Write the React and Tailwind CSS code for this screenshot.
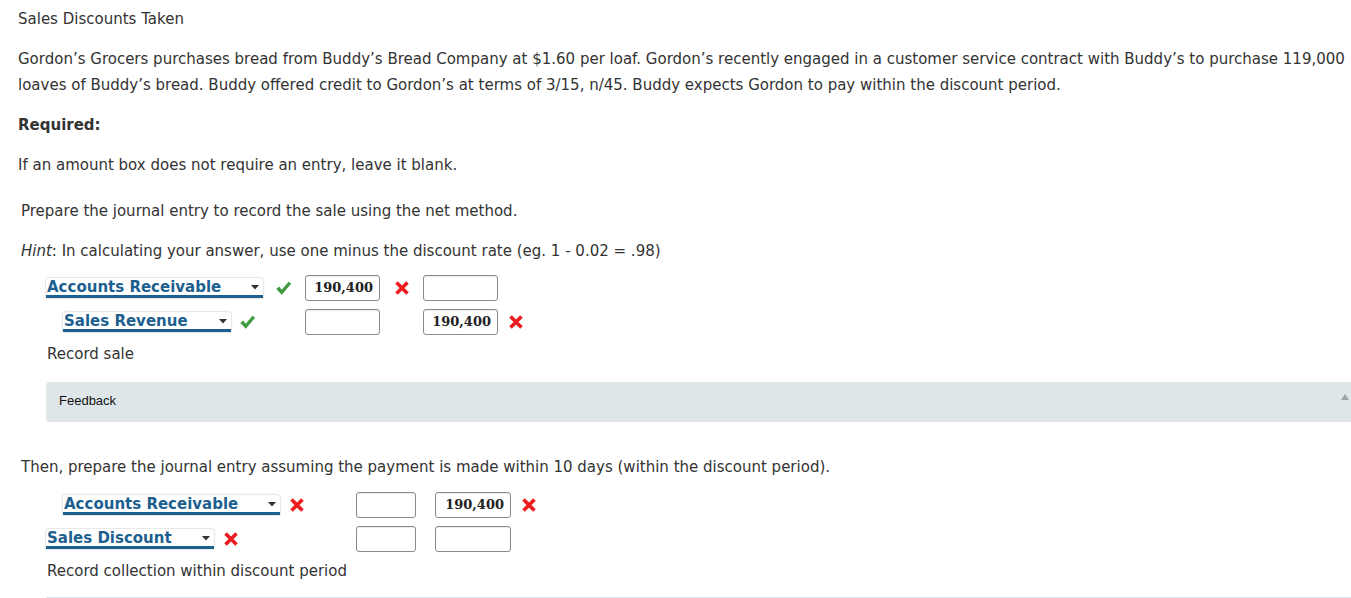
import React from "react";

const Check = () => (
  <svg width="17" height="17" viewBox="0 0 16 16" className="shrink-0">
    <path d="M1.2 8.4 L4 6.1 L6.3 9.2 L12.8 1.6 L15.2 3.6 L6.4 13.9 Z" fill="#3f9b3f" />
  </svg>
);

const Cross = () => (
  <svg width="14" height="14" viewBox="0 0 14 14" className="shrink-0">
    <path d="M1.5 1.5 L12.5 12.5 M12.5 1.5 L1.5 12.5" fill="none" stroke="#ec1c1f" strokeWidth="3.6" strokeLinecap="butt" />
  </svg>
);

const Select = ({ label, width }) => (
  <div
    className={`${width} h-[20px] flex items-center justify-between border-b-[3px] border-[#1d5f8f] shadow-[0_0_2px_rgba(0,0,0,0.35)] rounded-t-[3px] bg-white`}
  >
    <span className="font-bold text-[15px] leading-[18px] text-[#1d5f8f] pl-[1px]">{label}</span>
    <svg width="10" height="6" viewBox="0 0 10 6" className="mr-[3px]">
      <path d="M1 1 L9 1 L5 5.5 Z" fill="#333" />
    </svg>
  </div>
);

const Amount = ({ value, width = "w-[75px]" }) => (
  <div
    className={`${width} h-[26px] border border-[#8a8a8a] rounded-[3px] bg-white flex items-center justify-end pr-[6px] font-['DejaVu_Serif',serif] font-bold text-[13px] text-[#222] shadow-[inset_0_1px_1px_rgba(0,0,0,0.08)]`}
  >
    {value}
  </div>
);

const Mark = ({ type, className = "" }) => (
  <div className={`flex items-center ${className}`}>{type === "ok" ? <Check /> : type === "no" ? <Cross /> : null}</div>
);

const App = () => {
  return (
    <div className="w-[1351px] h-[598px] overflow-hidden bg-white font-['DejaVu_Sans',Verdana,sans-serif] text-[15px] leading-[26px] text-[#333] pt-[6px] pl-[18px]">
      <p>Sales Discounts Taken</p>
      <p className="mt-[14px] w-[1333px]">
        Gordon’s Grocers purchases bread from Buddy’s Bread Company at $1.60 per loaf. Gordon’s recently engaged in a customer
        service contract with Buddy’s to purchase 119,000 loaves of Buddy’s bread. Buddy offered credit to Gordon’s at terms of
        3/15, n/45. Buddy expects Gordon to pay within the discount period.
      </p>
      <p className="mt-[14px] font-bold">Required:</p>
      <p className="mt-[14px]">If an amount box does not require an entry, leave it blank.</p>

      <div className="pl-[3px]">
        <p className="mt-[20px]">Prepare the journal entry to record the sale using the net method.</p>
        <p className="mt-[14px]">
          <i>Hint</i>: In calculating your answer, use one minus the discount rate (eg. 1 - 0.02 = .98)
        </p>

        <div className="pl-[25px]">
          <div className="mt-[11px] flex items-center">
            <div className="w-[259px] flex items-center gap-[12px]">
              <Select label="Accounts Receivable" width="w-[217px]" />
              <Mark type="ok" />
            </div>
            <Amount value="190,400" />
            <Mark type="no" className="w-[43px] justify-center" />
            <Amount value="" />
          </div>
          <div className="mt-[8px] flex items-center">
            <div className="w-[259px] flex items-center gap-[8px] pl-[17px]">
              <Select label="Sales Revenue" width="w-[168px]" />
              <Mark type="ok" />
            </div>
            <Amount value="" />
            <div className="w-[43px]" />
            <Amount value="190,400" />
            <Mark type="no" className="w-[36px] justify-center" />
          </div>
          <p className="mt-[6px] pl-[1px]">Record sale</p>

          <div className="mt-[15px] h-[40px] w-[1320px] bg-[#dfe6ea] rounded-l-[4px] flex items-center justify-between pl-[13px] pr-[16px]">
            <span className="font-['Liberation_Sans',Arial,sans-serif] text-[13px] text-[#111] -mt-[2px]">Feedback</span>
            <svg width="10" height="8" viewBox="0 0 10 8" className="mb-[10px]">
              <path d="M1 7 L5 1 L9 7 Z" fill="#9aa3a8" />
            </svg>
          </div>
        </div>

        <p className="mt-[32px]">Then, prepare the journal entry assuming the payment is made within 10 days (within the discount period).</p>

        <div className="pl-[25px]">
          <div className="mt-[12px] flex items-center">
            <div className="w-[310px] flex items-center gap-[10px] pl-[17px]">
              <Select label="Accounts Receivable" width="w-[217px]" />
              <Mark type="no" />
            </div>
            <Amount value="" width="w-[60px]" />
            <div className="w-[19px]" />
            <Amount value="190,400" width="w-[76px]" />
            <Mark type="no" className="w-[36px] justify-center" />
          </div>
          <div className="mt-[8px] flex items-center">
            <div className="w-[310px] flex items-center gap-[10px]">
              <Select label="Sales Discount" width="w-[168px]" />
              <Mark type="no" />
            </div>
            <Amount value="" width="w-[60px]" />
            <div className="w-[19px]" />
            <Amount value="" width="w-[76px]" />
          </div>
          <p className="mt-[6px] pl-[1px]">Record collection within discount period</p>
          <div className="mt-[13px] h-px w-[1320px] bg-[#dde3e6]" />
        </div>
      </div>
    </div>
  );
};

export default App;
